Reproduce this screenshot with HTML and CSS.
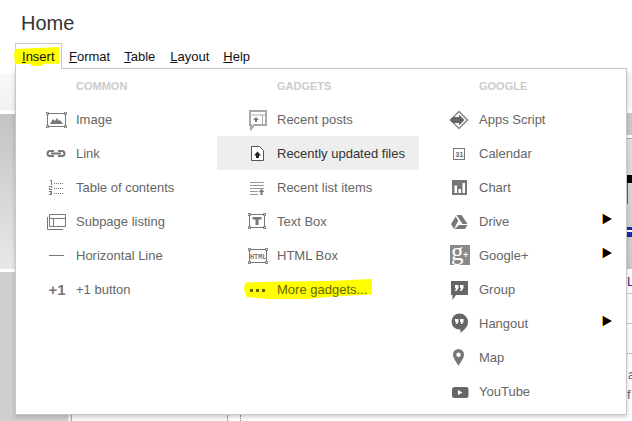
FILE: index.html
```html
<!DOCTYPE html>
<html lang="en">
<head>
<meta charset="utf-8">
<title>Home</title>
<link rel="stylesheet" href="styles.css">
</head>
<body>
<div class="page">
  <header class="top">
    <h1 class="title">Home</h1>
    <nav class="menubar">
      <span class="tab"><span class="tab-mark"></span><span class="tab-label"><u>I</u>nsert</span></span>
      <span class="bar-item bar-format"><u>F</u>ormat</span>
      <span class="bar-item bar-table"><u>T</u>able</span>
      <span class="bar-item bar-layout"><u>L</u>ayout</span>
      <span class="bar-item bar-help"><u>H</u>elp</span>
    </nav>
  </header>

  <div class="stage">
    <div class="side side-left">
      <div class="s-gap-6"></div>
      <div class="s-light-l"></div>
      <div class="s-white-4"></div>
      <div class="s-grad-l"></div>
      <div class="s-white-3"></div>
      <div class="s-grey"></div>
    </div>
    <div class="middle">
      <div class="under">
        <div class="under-grey"></div>
        <div class="under-pale"></div>
        <div class="under-cell"></div>
        <div class="under-dots"></div>
      </div>
    </div>
    <div class="side side-right">
      <div class="s-gap-5"></div>
      <div class="s-light-r"></div>
      <div class="s-grey-r"></div>
      <div class="s-white-3"></div>
      <div class="s-line"></div>
      <div class="s-grad-r">
        <div class="r-black"></div>
        <div class="r-stem"></div>
        <div class="r-grey"></div>
        <div class="r-blue"></div>
      </div>
      <div class="r-l">L</div>
      <div class="r-rule r-rule-1"></div>
      <div class="r-rule r-rule-2"></div>
      <div class="r-dots"></div>
      <div class="r-a">a</div>
      <div class="r-f">f</div>
    </div>
  </div>

  <div class="menu">
    <section class="col">
      <div class="col-head">COMMON</div>
      <div class="item"><svg class="icon" viewBox="0 0 24 24"><rect x="3.5" y="6.5" width="18" height="13" fill="none" stroke="#777"/><path d="M2.500 5.500h2v2h-2zM20.500 5.500h2v2h-2zM2.500 18.500h2v2h-2zM20.500 18.500h2v2h-2z" fill="#fff" stroke="#777" stroke-width="1"/><path d="M6 17l3-5 2 2 2-3 2 3 1-1 3 4z" fill="#777"/></svg><span>Image</span></div>
      <div class="item"><svg class="icon" viewBox="0 0 24 24"><path d="M10 10H6a2.5 2.5 0 0 0 0 5h4M14 10h4a2.500 2.500 0 0 1 0 5h-4M7 12.500h10" fill="none" stroke="#777" stroke-width="2"/></svg><span>Link</span></div>
      <div class="item"><svg class="icon" viewBox="0 0 24 24"><path d="M6 5h2v5H7V6H6zM5 11h3v2H6v1h2v1H5v-2h2v-1H5zM5 16h3v4H5v-1h2v-.500H6v-1h1V17H5z" fill="#777"/><path d="M10 8.500h10M10 13.500h10M10 18.500h10" stroke="#777" stroke-dasharray="1 1"/></svg><span>Table of contents</span></div>
      <div class="item"><svg class="icon" viewBox="0 0 24 24"><path d="M5.500 5.500h16v12h-16zM5.500 9.500h16M9.500 9.500v8M3.500 8v12.500H19" fill="none" stroke="#777"/></svg><span>Subpage listing</span></div>
      <div class="item"><svg class="icon" viewBox="0 0 24 24"><path d="M5 12.500h15" stroke="#777"/></svg><span>Horizontal Line</span></div>
      <div class="item"><svg class="icon" viewBox="0 0 24 24"><text class="plus-one" x="4.500" y="18">+1</text></svg><span>+1 button</span></div>
    </section>

    <section class="col">
      <div class="col-head">GADGETS</div>
      <div class="item"><svg class="icon" viewBox="0 0 24 24"><path d="M5 4h16v14H9l-3 4v-4H5z" fill="none" stroke="#aaa" stroke-width="2"/><path d="M6 8h14" stroke="#aaa"/><path d="M17.500 8v9" stroke="#aaa"/><path d="M11 10l3 3h-2v2h-2v-2H8z" fill="#777"/></svg><span>Recent posts</span></div>
      <div class="item item-active"><svg class="icon" viewBox="0 0 24 24"><path d="M6.500 5.500h8l4 4v10h-12z" fill="#fff" stroke="#555"/><path d="M12.500 10.500l3.500 4h-2v2.500h-3v-2.500H9z" fill="#222"/></svg><span>Recently updated files</span></div>
      <div class="item"><svg class="icon" viewBox="0 0 24 24"><path d="M5 7.500h14M5 10.500h14M5 13.500h14M5 16.500h8M5 19.500h8" stroke="#999"/><path d="M16.500 14l3 3h-2v3h-2v-3h-2z" fill="#777"/></svg><span>Recent list items</span></div>
      <div class="item"><svg class="icon" viewBox="0 0 24 24"><rect x="4.500" y="5.500" width="15" height="13" fill="none" stroke="#777"/><path d="M3.500 4.500h2v2h-2zM18.500 4.500h2v2h-2zM3.500 17.500h2v2h-2zM18.500 17.500h2v2h-2z" fill="#fff" stroke="#777"/><path d="M7.500 8h9v2.500h-3V16h-3v-5.500h-3z" fill="#777"/></svg><span>Text Box</span></div>
      <div class="item"><svg class="icon" viewBox="0 0 24 24"><rect x="4.500" y="6.500" width="17" height="13" fill="none" stroke="#777"/><path d="M3.500 5.500h2v2h-2zM20.500 5.500h2v2h-2zM3.500 18.500h2v2h-2zM20.500 18.500h2v2h-2z" fill="#fff" stroke="#777"/><text class="html-tag" x="5" y="15.500">HTML</text></svg><span>HTML Box</span></div>
      <div class="item item-marked"><span class="gadget-mark"></span><svg class="icon" viewBox="0 0 24 24"><path d="M5 12h3v3H5zM11 12h3v3h-3zM17 12h3v3h-3z" fill="#666600"/></svg><span class="marked-label">More gadgets...</span></div>
    </section>

    <section class="col">
      <div class="col-head">GOOGLE</div>
      <div class="item"><svg class="icon" viewBox="0 0 24 24"><path d="M12 4.500l8.500 8.500-8.500 8.500L3.500 13z" fill="#fff" stroke="#888" stroke-width="1.500"/><path d="M3 13l3-3h6V7.500l5.500 5.500-5.500 5.500V16H6z" fill="#666"/></svg><span>Apps Script</span></div>
      <div class="item"><svg class="icon" viewBox="0 0 24 24"><rect x="6.500" y="7.500" width="11" height="11" fill="none" stroke="#777"/><text class="cal-day" x="8.500" y="16">31</text></svg><span>Calendar</span></div>
      <div class="item"><svg class="icon" viewBox="0 0 24 24"><path d="M5 5h15v15H5z" fill="#777"/><path d="M7.500 10.500h2.500V18H7.500zM11.500 14h2.500v4h-2.500zM15.500 8h2.500v10h-2.500z" fill="#fff"/></svg><span>Chart</span></div>
      <div class="item item-sub"><svg class="icon" viewBox="0 0 24 24"><path d="M9.500 6h5l6 9h-5zM8.700 7.500l2.600 4.200L7 20l-3-5z" fill="#777"/><path d="M12 16h8.500l-2.500 4H7.500z" fill="#777"/></svg><span>Drive</span><svg class="arrow" viewBox="0 0 10 10"><path d="M1 0l9 5-9 5z" fill="#000"/><path d="M.5 0v10" stroke="#f5a623"/></svg></div>
      <div class="item item-sub"><svg class="icon" viewBox="0 0 24 24"><rect x="3" y="2" width="20" height="20" fill="#888"/><text class="gplus" x="4" y="17">g</text><text class="gplus-add" x="16" y="15">+</text></svg><span>Google+</span><svg class="arrow" viewBox="0 0 10 10"><path d="M1 0l9 5-9 5z" fill="#000"/><path d="M.5 0v10" stroke="#f5a623"/></svg></div>
      <div class="item"><svg class="icon" viewBox="0 0 24 24"><path d="M4 4h17v14H9l-3.500 5v-5H4z" fill="#666"/><path d="M8 8h3.500v3l-2 3H8l1-3H8zM13 8h3.500v3l-2 3H13l1-3h-1z" fill="#fff"/></svg><span>Group</span></div>
      <div class="item item-sub"><svg class="icon" viewBox="0 0 24 24"><path d="M12.500 2.500a8.500 8.500 0 0 1 8.500 8.500c0 5-4 8-7.500 11v-3.500h-1a8 8 0 0 1 0-16z" fill="#666"/><path d="M8 8h3.500v3l-1.500 2H8.500l1-2H8zM13 8h3.500v3L15 13h-1.500l1-2H13z" fill="#fff"/></svg><span>Hangout</span><svg class="arrow" viewBox="0 0 10 10"><path d="M1 0l9 5-9 5z" fill="#000"/><path d="M.5 0v10" stroke="#f5a623"/></svg></div>
      <div class="item"><svg class="icon" viewBox="0 0 24 24"><path fill-rule="evenodd" d="M11.500 4a5.500 5.500 0 0 1 5.500 5.500c0 4-3.500 7.500-5.500 11.500C9.500 17 6 13.500 6 9.500A5.500 5.500 0 0 1 11.500 4zm0 3.500a2.200 2.200 0 1 0 0 4.400 2.200 2.200 0 0 0 0-4.400z" fill="#777"/></svg><span>Map</span></div>
      <div class="item"><svg class="icon" viewBox="0 0 24 24"><rect x="5" y="8" width="16.500" height="11" rx="2.500" fill="#666"/><path d="M11 11v5l4.500-2.500z" fill="#fff"/></svg><span>YouTube</span></div>
    </section>
  </div>
</div>
</body>
</html>
```

FILE: styles.css
```css
* { box-sizing: border-box; }
html, body { margin: 0; padding: 0; }
body { background: #fff; font-family: "Liberation Sans", Arial, sans-serif; color: #222; }

.page { position: relative; width: 632px; height: 421px; overflow: hidden; display: flex; flex-direction: column; background: #fff; }

/* header */
.top { height: 68px; flex: none; display: flex; flex-direction: column; }
.title { margin: 0; padding: 11px 0 0 21px; height: 43px; font-size: 20px; line-height: 24px; font-weight: 400; color: #333; }
.menubar { display: flex; align-items: flex-start; padding-left: 15px; height: 25px; font-size: 13px; line-height: 26px; color: #111; }
.tab { position: relative; z-index: 3; height: 26px; width: 47px; padding-left: 6px; border: 1px solid #c8c8c8; border-bottom: 0; background: #fff; }
.tab-mark { position: absolute; left: -2px; top: 3px; width: 45px; height: 19px; background: #ff0; clip-path: polygon(3% 10%, 40% 6%, 100% 0, 100% 88%, 66% 88%, 60% 100%, 40% 100%, 36% 90%, 2% 90%, 0 40%); }
.tab-label { position: relative; }
.bar-item { padding-top: 1px; }
.bar-format { margin-left: 7px; }
.bar-table { margin-left: 14px; }
.bar-layout { margin-left: 15px; }
.bar-help { margin-left: 14px; }

/* backdrop showing around the menu */
.stage { flex: 1; display: flex; min-height: 0; }
.side { flex: none; display: flex; flex-direction: column; }
.side-left { width: 15px; }
.side-right { width: 5px; position: relative; }
.middle { flex: 1; display: flex; align-items: flex-end; }
.under { width: 100%; height: 6px; display: flex; font-size: 0; }
.under-grey { width: 53px; background: #d0d0d0; }
.under-pale { width: 4px; background: #f0f0f0; border-right: 1px solid #aaa; }
.under-cell { width: 156px; background: #fafafa; border-right: 1px solid #aaa; }
.under-dots { width: 13px; border-right: 1px dotted #888; }

.s-gap-6 { height: 6px; }
.s-light-l { height: 36px; background: linear-gradient(#f8f8f8, #f1f1f1); }
.s-white-4 { height: 4px; background: #fff; }
.s-grad-l { height: 155px; background: linear-gradient(#c3c3c3, #e8e8e8); }
.s-white-3 { height: 3px; background: #fff; }
.s-grey { flex: 1; background: #cfcfcf; }

.s-gap-5 { height: 5px; }
.s-light-r { height: 35px; background: #f7f7f7; }
.s-grey-r { height: 22px; background: #c8c8c8; margin-top: 5px; }
.s-line { height: 1px; background: #aaa; }
.s-grad-r { height: 130px; display: flex; flex-direction: column; background: linear-gradient(#dedede, #cacaca); }
.r-black { height: 8px; margin-top: 36px; background: #000; }
.r-stem { width: 1px; height: 21px; background: #666; }
.r-grey { height: 23px; }
.r-blue { height: 10px; background: linear-gradient(#1133aa 0 30%, #fff 30% 50%, #1133aa 50%); }
.r-l { height: 24px; padding-top: 5px; font-size: 13px; line-height: 15px; color: #4a2a80; }
.r-rule { height: 1px; background: #ccc; }
.r-rule-2 { margin-top: 29px; }
.r-dots { margin-top: 29px; height: 1px; border-top: 1px dotted #999; }
.r-a { margin-top: 14px; font-size: 13px; line-height: 14px; color: #666; margin-left: 1px; }
.r-f { margin-top: 6px; font-size: 13px; line-height: 14px; color: #666; }

/* menu overlay */
.menu { position: absolute; z-index: 2; left: 15px; top: 68px; width: 612px; height: 347px; display: grid; grid-template-columns: 201px 202px 1fr; background: #fff; border: 1px solid #c8c8c8; box-shadow: 0 2px 4px rgba(0, 0, 0, .2); }
.col { display: flex; flex-direction: column; }
.col-head { height: 33px; padding-left: 60px; font-size: 11px; font-weight: 700; line-height: 34px; color: #ccc; }
.item { position: relative; height: 34px; display: flex; align-items: center; gap: 8px; padding-left: 28px; font-size: 13px; color: #666; }
.item-active { background: #eee; color: #333; }
.item-sub .arrow { margin-left: auto; margin-right: 14px; margin-top: -5px; }
.icon { flex: none; width: 24px; height: 24px; position: relative; }
.arrow { flex: none; width: 10px; height: 10px; }
.item-marked .marked-label { position: relative; color: #666600; }
.gadget-mark { position: absolute; left: 27px; top: 7px; width: 128px; height: 20px; background: #ff0; clip-path: polygon(1% 18%, 30% 12%, 65% 10%, 100% 0, 100% 78%, 70% 88%, 50% 100%, 20% 100%, 2% 90%, 0 50%); }

/* icon text */
.plus-one { font-family: "Liberation Sans", Arial, sans-serif; font-size: 15px; font-weight: 700; fill: #777; }
.html-tag { font-family: "DejaVu Sans Mono", "Liberation Mono", monospace; font-size: 6.800px; font-weight: 700; fill: #777; }
.cal-day { font-family: "Liberation Sans", Arial, sans-serif; font-size: 7px; font-weight: 700; fill: #666; }
.gplus { font-family: "Liberation Serif", serif; font-size: 25px; fill: #fff; }
.gplus-add { font-family: "Liberation Sans", Arial, sans-serif; font-size: 9px; font-weight: 700; fill: #fff; }
```
